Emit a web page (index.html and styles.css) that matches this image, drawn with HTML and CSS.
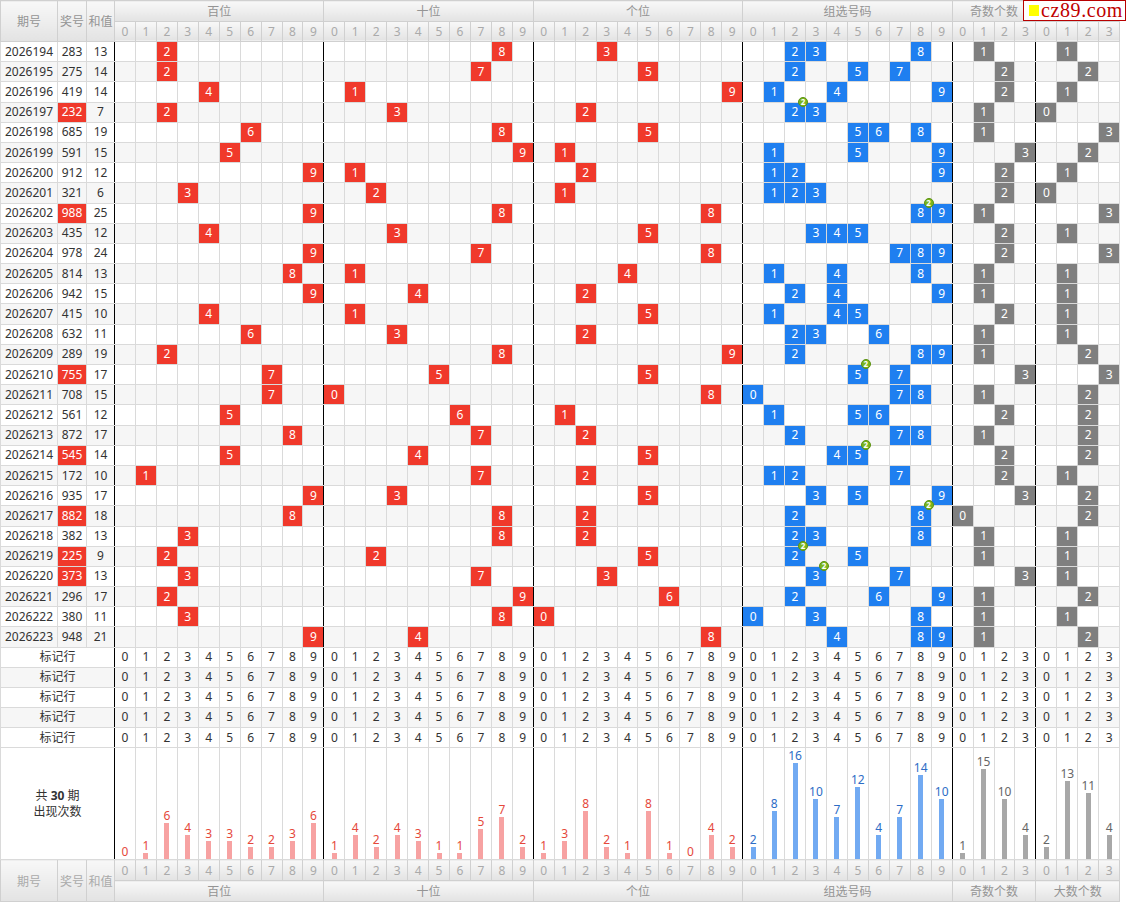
FILE: index.html
```html
<!DOCTYPE html>
<html lang="zh-CN">
<head>
<meta charset="utf-8">
<title>走势图</title>
<link rel="stylesheet" href="styles.css">
</head>
<body>
<div class="page">
  <table class="chart" id="chart">
    <colgroup id="cols"></colgroup>
    <thead class="hd" id="thead"></thead>
    <tbody class="rows" id="rows"></tbody>
    <tbody class="marks" id="marks"></tbody>
    <tbody class="stats" id="stats"></tbody>
    <tfoot class="hd ft" id="tfoot"></tfoot>
  </table>
  <div class="logo"><span class="sq"></span><span class="lt">cz89.com</span></div>
</div>
<script src="script.js"></script>
</body>
</html>
```

FILE: styles.css
```css
* { box-sizing: border-box; }
html, body { margin: 0; padding: 0; background: #fff; }
body {
  font-family: "Noto Sans", "Noto Sans CJK SC", sans-serif;
  font-size: 12px;
  color: #333;
}
.page { position: relative; width: 1127px; height: 907px; overflow: hidden; }

.chart { border-collapse: collapse; table-layout: fixed; width: 1120px; }
.chart col.c1 { width: 57px; }
.chart col.c2 { width: 29px; }
.chart col.c3 { width: 28px; }
.chart col.cd { width: 20.95px; }

.chart td, .chart th {
  border: 1px solid #dadada;
  padding: 0;
  text-align: center;
  white-space: nowrap;
  font-weight: normal;
  overflow: visible;
}

.hd th { background: linear-gradient(#f8f8f8, #e3e3e3); color: #999; border-color: #d0d0d0; }
.hd .r1 th { height: 20.5px; font-size: 12px; }
.hd .r2 th { height: 20.5px; color: #aaa; }
.hd th.nm { color: #949494; font-size: 12px; }

.rows td { height: 20.2px; line-height: 18px; }
.marks td { height: 20.1px; line-height: 18px; }
.alt td { background: #f6f6f6; }

.chart td.s { border-left-color: #000; }
.chart td.e { border-right-color: #000; }

td.hr { background: #f0392b; color: #fff; }
td.r { background: #f0392b; color: #fff; }
td.b { background: #1f7ff0; color: #fff; }
td.g { background: #7f7f7f; color: #fff; }
td.dup { position: relative; }
.bd {
  position: absolute;
  top: -6px;
  right: -3px;
  width: 10px;
  height: 10px;
  border-radius: 50%;
  background: #7ab51d;
  border: 1px solid #5c9212;
  color: #fff;
  font-size: 8px;
  line-height: 8px;
  font-weight: bold;
  text-align: center;
  z-index: 3;
}

.stats td { height: 112.4px; vertical-align: bottom; }
.stats td.tot { vertical-align: middle; line-height: 16px; color: #333; }
.tot b { font-weight: bold; }
.lb { line-height: 14px; font-size: 12px; }
.bar { width: 5px; margin: 0 auto; }
.rd .lb { color: #e5483b; }
.rd .bar { background: #f7a2a2; }
.bl .lb { color: #2d6dc6; }
.bl .bar { background: #72aaf2; }
.gy .lb { color: #666; }
.gy .bar { background: #a8a8a8; }

.ft .r1 th { height: 20.6px; color: #aaa; }
.ft .r2 th { height: 20.6px; }

.logo {
  position: absolute;
  top: 0;
  left: 1023px;
  width: 103px;
  height: 21px;
  border: 1px solid #b80000;
  background: #fff;
  display: flex;
  align-items: center;
}
.sq { width: 10px; height: 11px; background: #ffff00; margin-left: 5px; flex: none; }
.lt {
  margin-left: 2px;
  font-family: "Liberation Serif", serif;
  font-size: 20px;
  letter-spacing: 0.6px;
  color: #c00000;
  line-height: 19px;
}
```

FILE: script.js
```js
(function () {
  var rows = [
    ["2026194","283",13],["2026195","275",14],["2026196","419",14],["2026197","232",7],
    ["2026198","685",19],["2026199","591",15],["2026200","912",12],["2026201","321",6],
    ["2026202","988",25],["2026203","435",12],["2026204","978",24],["2026205","814",13],
    ["2026206","942",15],["2026207","415",10],["2026208","632",11],["2026209","289",19],
    ["2026210","755",17],["2026211","708",15],["2026212","561",12],["2026213","872",17],
    ["2026214","545",14],["2026215","172",10],["2026216","935",17],["2026217","882",18],
    ["2026218","382",13],["2026219","225",9],["2026220","373",13],["2026221","296",17],
    ["2026222","380",11],["2026223","948",21]
  ];
  var groups = [["百位",10],["十位",10],["个位",10],["组选号码",10],["奇数个数",4],["大数个数",4]];
  var starts = [0,10,20,30,40,44], ends = [9,19,29,39,43];
  function sc(i) {
    var c = [];
    if (starts.indexOf(i) >= 0) c.push("s");
    if (ends.indexOf(i) >= 0) c.push("e");
    return c;
  }
  function digitOf(i) { return i < 40 ? i % 10 : (i - 40) % 4; }

  var cols = '<col class="c1"><col class="c2"><col class="c3">';
  for (var i = 0; i < 48; i++) cols += '<col class="cd">';
  document.getElementById("cols").innerHTML = cols;

  function digitHeads() {
    var h = "";
    for (var i = 0; i < 48; i++) h += "<th>" + digitOf(i) + "</th>";
    return h;
  }
  function groupHeads() {
    var h = "";
    groups.forEach(function (g) { h += '<th class="nm" colspan="' + g[1] + '">' + g[0] + "</th>"; });
    return h;
  }
  var lead = '<th rowspan="2" class="nm">期号</th><th rowspan="2" class="nm">奖号</th><th rowspan="2" class="nm">和值</th>';
  document.getElementById("thead").innerHTML =
    '<tr class="r1">' + lead + groupHeads() + '</tr><tr class="r2">' + digitHeads() + "</tr>";
  document.getElementById("tfoot").innerHTML =
    '<tr class="r1">' + lead + digitHeads() + '</tr><tr class="r2">' + groupHeads() + "</tr>";

  var body = "";
  rows.forEach(function (r, ri) {
    var d = r[1].split("").map(Number);
    var pair = d[0] === d[1] || d[1] === d[2] || d[0] === d[2];
    var odd = d.filter(function (x) { return x % 2 === 1; }).length;
    var big = d.filter(function (x) { return x >= 5; }).length;
    var h = '<tr' + (ri % 2 === 1 ? ' class="alt"' : '') + '>';
    h += "<td>" + r[0] + "</td>";
    h += '<td' + (pair ? ' class="hr"' : '') + '>' + r[1] + "</td>";
    h += '<td class="e">' + r[2] + "</td>";
    for (var i = 0; i < 48; i++) {
      var c = sc(i), txt = "";
      if (i < 30) {
        var pos = Math.floor(i / 10), dg = i % 10;
        if (d[pos] === dg) { c.push("r"); txt = dg; }
      } else if (i < 40) {
        var dg2 = i - 30;
        var n = d.filter(function (x) { return x === dg2; }).length;
        if (n > 0) {
          c.push("b"); txt = String(dg2);
          if (n > 1) { c.push("dup"); txt += '<span class="bd">' + n + "</span>"; }
        }
      } else if (i < 44) {
        if (odd === i - 40) { c.push("g"); txt = i - 40; }
      } else {
        if (big === i - 44) { c.push("g"); txt = i - 44; }
      }
      h += '<td' + (c.length ? ' class="' + c.join(" ") + '"' : '') + '>' + txt + "</td>";
    }
    body += h + "</tr>";
  });
  document.getElementById("rows").innerHTML = body;

  var marks = "";
  for (var m = 0; m < 5; m++) {
    var h2 = '<tr' + (m % 2 === 1 ? ' class="alt"' : '') + '><td colspan="3" class="e">标记行</td>';
    for (var i2 = 0; i2 < 48; i2++) {
      var c2 = sc(i2);
      h2 += '<td' + (c2.length ? ' class="' + c2.join(" ") + '"' : '') + '>' + digitOf(i2) + "</td>";
    }
    marks += h2 + "</tr>";
  }
  document.getElementById("marks").innerHTML = marks;

  var counts = [0,1,6,4,3,3,2,2,3,6, 1,4,2,4,3,1,1,5,7,2, 1,3,8,2,1,8,1,0,4,2,
                2,8,16,10,7,12,4,7,14,10, 1,15,10,4, 2,13,11,4];
  var st = '<tr><td colspan="3" class="e tot">共 <b>30</b> 期<br>出现次数</td>';
  for (var k = 0; k < 48; k++) {
    var c3 = sc(k);
    c3.push(k < 30 ? "rd" : (k < 40 ? "bl" : "gy"));
    st += '<td class="' + c3.join(" ") + '"><div class="lb">' + counts[k] +
      '</div><div class="bar" style="height:' + (counts[k] * 6) + 'px"></div></td>';
  }
  document.getElementById("stats").innerHTML = st + "</tr>";
})();
```
